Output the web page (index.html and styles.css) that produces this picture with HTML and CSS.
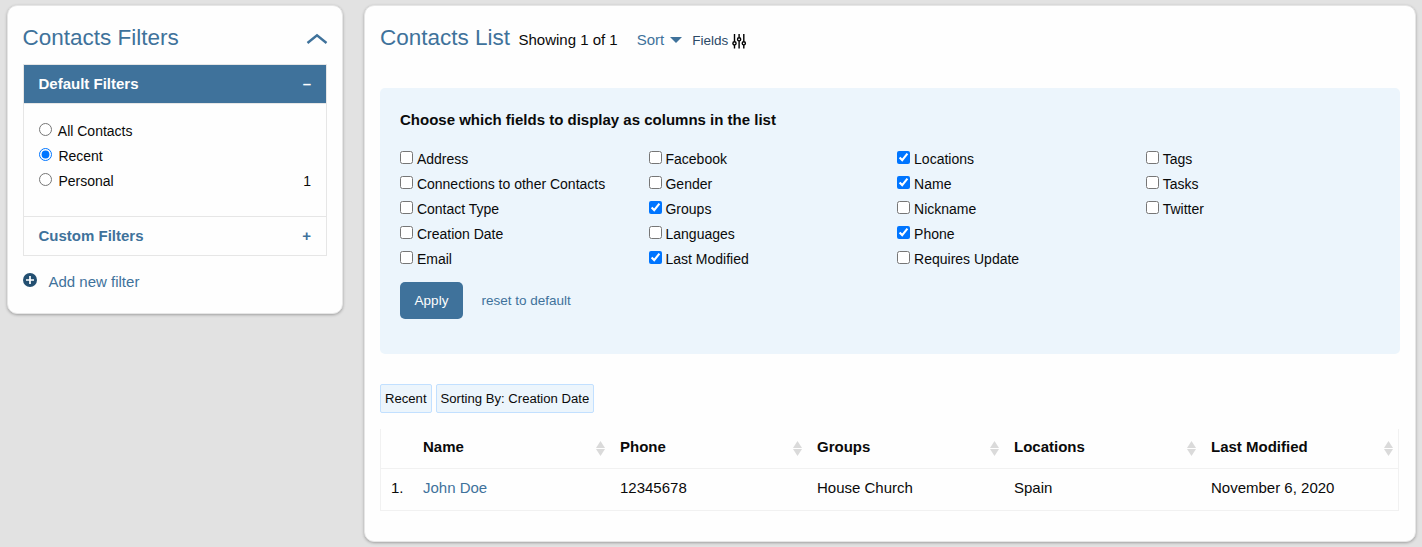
FILE: index.html
```html
<!DOCTYPE html>
<html lang="en">
<head>
<meta charset="utf-8">
<title>Contacts</title>
<link rel="stylesheet" href="styles.css">
</head>
<body>
<div class="page">
  <aside class="card filters">
    <div class="filters-head">
      <h2 class="title">Contacts Filters</h2>
      <svg class="chevron" width="22" height="12" viewBox="0 0 22 12"><path d="M1.5 10 L11 2.2 L20.5 10" fill="none" stroke="#3f729b" stroke-width="2.4"/></svg>
    </div>
    <div class="accordion">
      <div class="acc-title active"><span>Default Filters</span><span>–</span></div>
      <div class="acc-body">
        <label class="option first"><input type="radio" name="view"><span>All Contacts</span></label>
        <label class="option"><input type="radio" name="view" checked><span>Recent</span></label>
        <label class="option"><input type="radio" name="view"><span>Personal</span><span class="count">1</span></label>
      </div>
      <div class="acc-title"><span>Custom Filters</span><span>+</span></div>
    </div>
    <a class="add-filter">
      <svg width="14" height="14" viewBox="0 0 14 14"><circle cx="7" cy="7" r="7" fill="#234f71"/><path d="M7 3v8M3 7h8" stroke="#fff" stroke-width="1.7"/></svg>
      <span>Add new filter</span>
    </a>
  </aside>

  <main class="card list">
    <div class="list-head">
      <h2 class="title">Contacts List</h2>
      <span class="showing">Showing 1 of 1</span>
      <a class="sort">Sort</a>
      <svg class="caret" width="12" height="6" viewBox="0 0 12 6"><path d="M0 0h12L6 6z" fill="#3f729b"/></svg>
      <a class="fields-link">Fields</a>
      <svg class="sliders" width="15" height="15" viewBox="0 0 15 15" fill="none" stroke="#000" stroke-width="1.4"><path d="M2.5 0v7.6M2.5 11v3.6M7.1 0v3.6M7.1 7v7.6M11.8 0v7.6M11.8 11v3.6"/><circle cx="2.5" cy="9.3" r="1.6"/><circle cx="7.1" cy="5.3" r="1.6"/><circle cx="11.8" cy="9.3" r="1.6"/></svg>
    </div>

    <section class="picker">
      <h3 class="picker-title">Choose which fields to display as columns in the list</h3>
      <div class="picker-grid">
        <label class="field"><input type="checkbox"><span>Address</span></label>
        <label class="field"><input type="checkbox"><span>Connections to other Contacts</span></label>
        <label class="field"><input type="checkbox"><span>Contact Type</span></label>
        <label class="field"><input type="checkbox"><span>Creation Date</span></label>
        <label class="field"><input type="checkbox"><span>Email</span></label>
        <label class="field"><input type="checkbox"><span>Facebook</span></label>
        <label class="field"><input type="checkbox"><span>Gender</span></label>
        <label class="field"><input type="checkbox" checked><span>Groups</span></label>
        <label class="field"><input type="checkbox"><span>Languages</span></label>
        <label class="field"><input type="checkbox" checked><span>Last Modified</span></label>
        <label class="field"><input type="checkbox" checked><span>Locations</span></label>
        <label class="field"><input type="checkbox" checked><span>Name</span></label>
        <label class="field"><input type="checkbox"><span>Nickname</span></label>
        <label class="field"><input type="checkbox" checked><span>Phone</span></label>
        <label class="field"><input type="checkbox"><span>Requires Update</span></label>
        <label class="field"><input type="checkbox"><span>Tags</span></label>
        <label class="field"><input type="checkbox"><span>Tasks</span></label>
        <label class="field"><input type="checkbox"><span>Twitter</span></label>
      </div>
      <div class="picker-actions">
        <button class="apply">Apply</button>
        <a class="reset">reset to default</a>
      </div>
    </section>

    <div class="chips"><span class="chip">Recent</span><span class="chip">Sorting By: Creation Date</span></div>

    <div class="table">
      <div class="row head">
        <span></span>
        <span class="th">Name<i class="sorter"></i></span>
        <span class="th">Phone<i class="sorter"></i></span>
        <span class="th">Groups<i class="sorter"></i></span>
        <span class="th">Locations<i class="sorter"></i></span>
        <span class="th">Last Modified<i class="sorter"></i></span>
      </div>
      <div class="row">
        <span class="td">1.</span>
        <a class="td link">John Doe</a>
        <span class="td">12345678</span>
        <span class="td">House Church</span>
        <span class="td">Spain</span>
        <span class="td">November 6, 2020</span>
      </div>
    </div>
  </main>
</div>
</body>
</html>
```
FILE: styles.css
```css
* { box-sizing: border-box; }
body {
  margin: 0;
  background: #e2e2e2;
  color: #0a0a0a;
  font: 15px/24px "Liberation Sans", Arial, sans-serif;
  overflow: hidden;
}
.page {
  display: flex;
  align-items: flex-start;
  justify-content: space-between;
  height: 547px;
  padding: 5px 6px 0 7px;
}
.card {
  background: #fefefe;
  border: 1px solid #e6e6e6;
  border-radius: 10px;
  box-shadow: 0 1px 3px rgba(0, 0, 0, .3);
  padding: 0 15px;
}
.filters { width: 336px; height: 309px; }
.list { width: 1052px; height: 537px; }
.title {
  margin: 0;
  font-size: 22.5px;
  line-height: 32px;
  font-weight: 400;
  color: #3f729b;
}
.filters-head {
  display: flex;
  justify-content: space-between;
  height: 58px;
  padding-top: 16px;
}
.filters-head .title { margin-left: -.5px; }
.chevron { margin: 11px -1px 0 0; }
.accordion { border: 1px solid #e6e6e6; height: 192px; }
.acc-title {
  display: flex;
  justify-content: space-between;
  padding: 0 15px 0 14.5px;
  height: 38px;
  line-height: 38px;
  font-weight: 700;
  color: #3f729b;
}
.acc-title.active { background: #3f729b; color: #fefefe; }
.acc-body {
  height: 114px;
  padding: 15px 15px 0;
  border: solid #e6e6e6;
  border-width: 1px 0;
}
.option, .field {
  display: flex;
  align-items: flex-start;
  height: 25px;
  line-height: 25px;
  font-size: 14px;
}
.option input { margin: 4px 6.4px 0 0; }
.option.first input { margin-right: 5.8px; }
.field input { margin: 4px 3.9px 0 0; }
.count { margin-left: auto; }
.add-filter {
  display: flex;
  align-items: flex-start;
  gap: 11.5px;
  margin-top: 14px;
  color: #3f729b;
}
.add-filter svg { margin-top: 3px; }
.list-head {
  display: flex;
  align-items: flex-start;
  height: 82px;
  padding-top: 16px;
}
.showing { margin: 6px 0 0 8.4px; }
.sort { margin: 6px 0 0 19px; color: #3f729b; }
.caret { margin: 15px 10px 0 6px; }
.fields-link { margin-top: 7px; font-size: 13.5px; color: #2c4a66; }
.sliders { margin: 12px 0 0 3.8px; }
.picker {
  width: 1020px;
  height: 266px;
  padding: 20px 20px 0;
  background: #ecf5fc;
  border-radius: 5px;
}
.picker-title { margin: 0 0 15px; font-size: 15px; line-height: 24px; }
.picker-grid {
  display: grid;
  grid-template-rows: repeat(5, 25px);
  grid-auto-flow: column;
  grid-auto-columns: 248.6px;
}
.picker-actions { display: flex; align-items: center; gap: 18.5px; margin-top: 10px; }
.apply {
  width: 63px;
  height: 37px;
  padding: 0;
  border: 0;
  border-radius: 5px;
  background: #3f729b;
  color: #fefefe;
  font: 13.5px "Liberation Sans", Arial, sans-serif;
}
.reset { font-size: 13.5px; color: #3f729b; }
.chips { display: flex; gap: 4px; margin-top: 30px; }
.chip {
  height: 29px;
  padding: 0 4px;
  border: 1px solid #c2e0ff;
  border-radius: 2px;
  background: #ecf5fc;
  font-size: 13.125px;
  line-height: 27px;
}
.table {
  width: 1019px;
  margin-top: 16px;
  border: 1px solid #f1f1f1;
  border-top: 0;
}
.row {
  display: grid;
  grid-template-columns: 32px repeat(5, 197px);
  height: 41px;
}
.row.head { height: 40px; border-bottom: 1px solid #f1f1f1; }
.th {
  display: flex;
  justify-content: space-between;
  padding: 6px 5px 0 10px;
  font-weight: 700;
}
.td { padding: 7px 0 0 10px; }
.link { color: #3f729b; }
.sorter { display: flex; flex-direction: column; gap: 1px; padding-top: 6px; }
.sorter::before, .sorter::after {
  content: "";
  width: 9px;
  height: 7px;
  background: #dadada;
  clip-path: polygon(50% 0, 100% 100%, 0 100%);
}
.sorter::after { clip-path: polygon(0 0, 100% 0, 50% 100%); }
```
